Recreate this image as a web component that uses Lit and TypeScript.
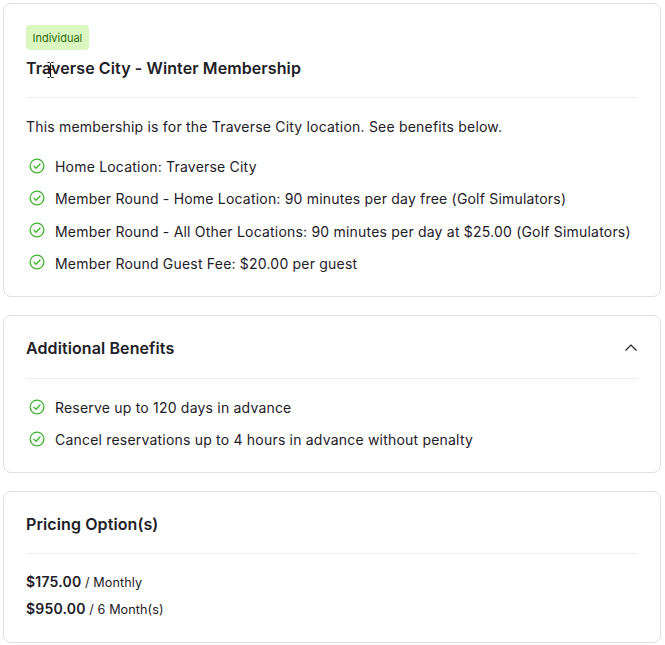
import { LitElement, html, css } from "lit";
import { customElement } from "lit/decorators.js";

const check = html`<svg class="chk" viewBox="0 0 16 16" fill="none" stroke="#3fb52f" stroke-width="1.3" stroke-linecap="round" stroke-linejoin="round"><circle cx="8" cy="8" r="6.9"/><path d="M5 8.2 7.1 10.2 11 6"/></svg>`;

@customElement("app-root")
export class AppRoot extends LitElement {
  static styles = css`
    :host { display: block; font-family: Inter, "Liberation Sans", sans-serif; color: #1d2026; font-size: 14px; letter-spacing: .2px; background: #fff; height: 645px; overflow: hidden; position: relative; }
    .page { display: flex; flex-direction: column; gap: 18px; padding: 3px 4px 0 3px; }
    .card { border: 1px solid #e0e0e0; border-radius: 8px; padding: 0 22px; background: #fff; }
    .c1 { height: 294px; box-sizing: border-box; padding-top: 21px; }
    .c2 { height: 158px; box-sizing: border-box; }
    .c3 { height: 152px; box-sizing: border-box; }
    .badge { display: inline-flex; align-items: center; height: 25px; padding: 0 6.5px; background: #d9f7be; border-radius: 4px; font-size: 11px; letter-spacing: 0; color: #2f6b10; box-sizing: border-box; }
    h2 { margin: 0; font-size: 16px; font-weight: 600; line-height: 24px; color: #1d2026; letter-spacing: .1px; }
    .c1 h2 { margin-top: 6px; padding-bottom: 17px; border-bottom: 1px solid #eeeeee; }
    .head { display: flex; justify-content: space-between; align-items: center; box-sizing: border-box; height: 63px; padding-top: 2px; border-bottom: 1px solid #eeeeee; }
    .c3 .head { height: 62px; }
    .intro { margin: 19px 0 0; line-height: 20px; }
    ul { list-style: none; margin: 0; padding: 0; display: flex; flex-direction: column; gap: 12.33px; }
    .c1 ul { margin-top: 20px; }
    .c2 ul { margin-top: 19px; }
    li { display: flex; gap: 10px; line-height: 20px; }
    .chk { width: 16px; height: 16px; margin: 0.5px 0 0 3px; flex: none; }
    .chev { width: 14px; height: 14px; }
    .prices { margin-top: 18px; display: flex; flex-direction: column; gap: 6px; }
    .price { line-height: 20px; font-size: 12.6px; letter-spacing: .1px; }
    .price b { font-size: 14px; font-weight: 600; letter-spacing: .2px; }
    .cursor { position: absolute; left: 47px; top: 62px; width: 7px; height: 16px; }
  `;
  render() {
    return html`<div class="page">
      <section class="card c1">
        <span class="badge">Individual</span>
        <h2>Traverse City - Winter Membership</h2>
        <p class="intro">This membership is for the Traverse City location. See benefits below.</p>
        <ul>
          <li>${check}Home Location: Traverse City</li>
          <li>${check}Member Round - Home Location: 90 minutes per day free (Golf Simulators)</li>
          <li>${check}Member Round - All Other Locations: 90 minutes per day at $25.00 (Golf Simulators)</li>
          <li>${check}Member Round Guest Fee: $20.00 per guest</li>
        </ul>
      </section>
      <section class="card c2">
        <div class="head"><h2>Additional Benefits</h2>
          <svg class="chev" viewBox="0 0 14 14" fill="none" stroke="#1d2026" stroke-width="1.2"><path d="M1.5 9.5 7 4l5.5 5.5"/></svg></div>
        <ul>
          <li>${check}Reserve up to 120 days in advance</li>
          <li>${check}Cancel reservations up to 4 hours in advance without penalty</li>
        </ul>
      </section>
      <section class="card c3">
        <div class="head"><h2>Pricing Option(s)</h2></div>
        <div class="prices">
          <div class="price"><b>$175.00</b> / Monthly</div>
          <div class="price"><b>$950.00</b> / 6 Month(s)</div>
        </div>
      </section>
    </div>
    <svg class="cursor" viewBox="0 0 7 16" fill="none" stroke="#111" stroke-width="1"><path d="M0.5 .5h2l1 1 1-1h2M3.5 1.5v13M0.5 15.5h2l1-1 1 1h2M1.5 7.5h4"/></svg>`;
  }
}
